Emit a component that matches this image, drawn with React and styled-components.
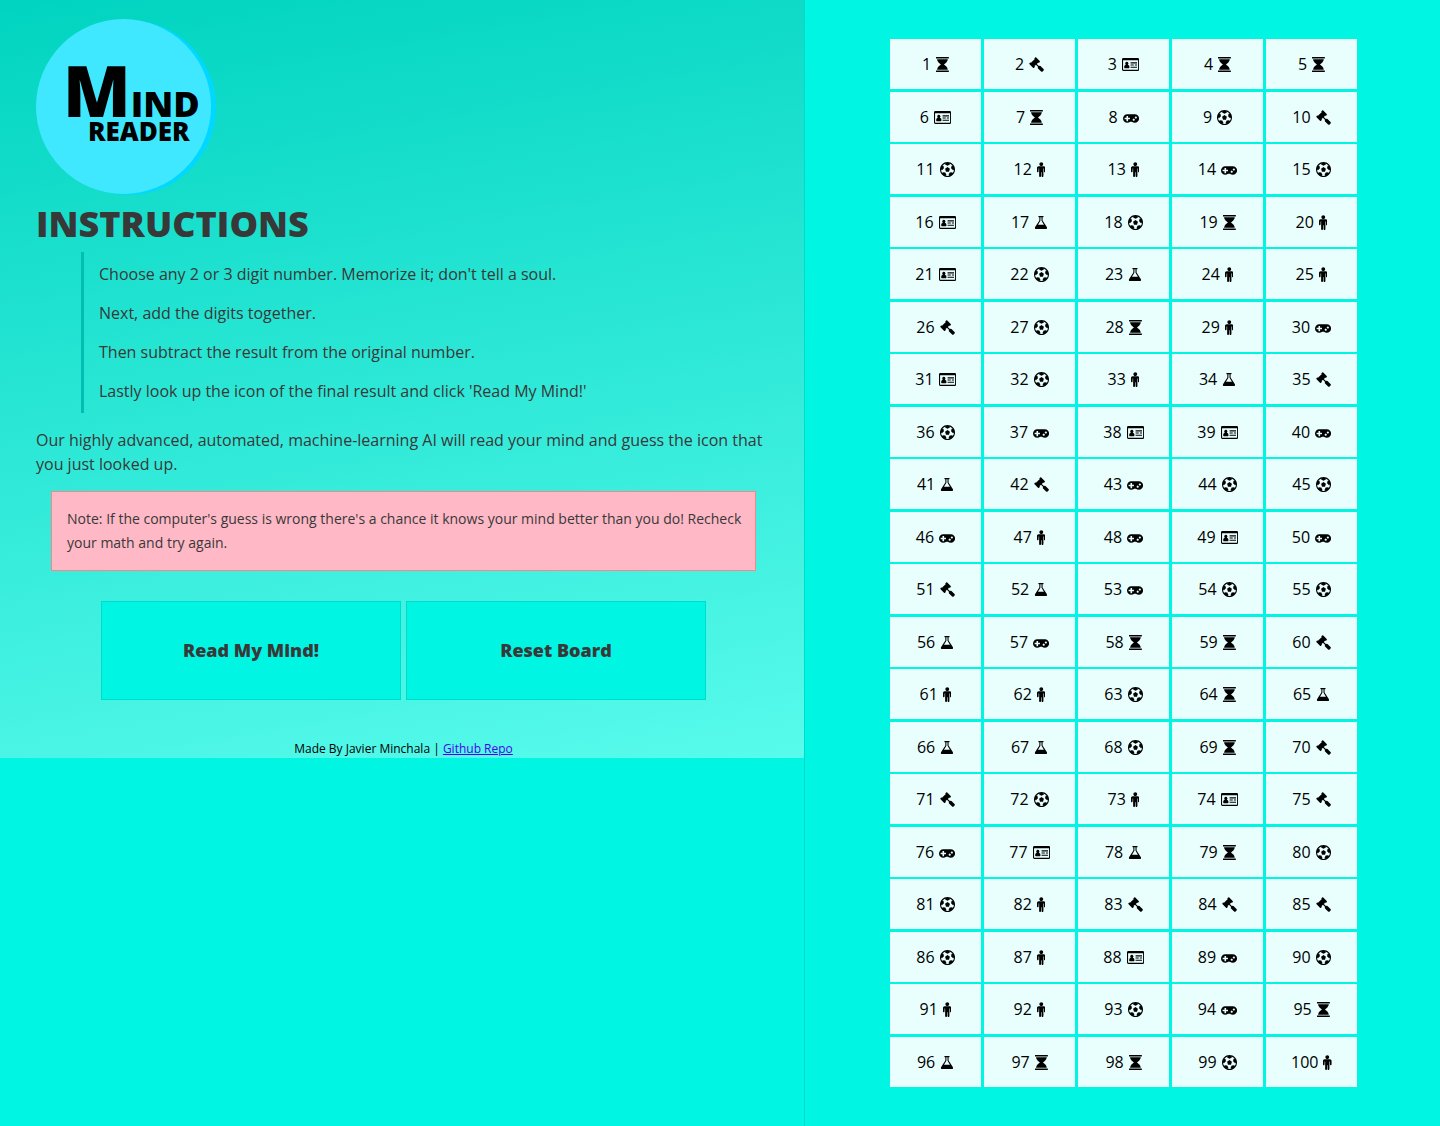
import React, { useState } from "react";
import styled, { createGlobalStyle } from "styled-components";

const GlobalStyle = createGlobalStyle`
  *, *::before, *::after { box-sizing: border-box; }
  body {
    margin: 0;
    background: #00f5e3;
    color: #000;
    font-family: "Open Sans", "Noto Sans", sans-serif;
    font-size: 16px;
    line-height: 24px;
  }
`;

const Page = styled.div`
  display: grid;
  grid-template-columns: 67fr 53fr;
  min-height: 100vh;
`;

const Intro = styled.main`
  align-self: start;
  padding: 19px 33px 0 36px;
  background: linear-gradient(170deg, #00d4c0, #58fbec);
  color: #383838;
`;

const Logo = styled.div`
  width: 175px;
  height: 175px;
  padding: 50px 0 0 27px;
  border-radius: 50%;
  background: #40e8ff;
  box-shadow: 5px 1px 0 #00d8ff;
  color: #000;
  font-weight: 800;
  white-space: nowrap;
`;

const LogoTop = styled.div`
  font-size: 36px;
  line-height: 42px;
`;

const LogoInitial = styled.span`
  font-size: 70px;
`;

const LogoBottom = styled.div`
  padding-left: 25px;
  font-size: 26px;
  line-height: 12px;
`;

const Title = styled.h1`
  margin: 5px 0 3px;
  font-size: 36px;
  font-weight: 800;
  line-height: 50px;
`;

const Steps = styled.ol`
  display: grid;
  gap: 15px;
  margin: 0 0 15px 45px;
  padding: 10px 0 10px 15px;
  border-left: 3px solid #00bfb2;
  list-style: none;
`;

const Text = styled.p`
  margin: 0;
`;

const Note = styled.aside`
  margin: 15px;
  padding: 15px 5px 15px 15px;
  border: 1px solid #fa8585;
  background: #ffb8c6;
  font-size: 14px;
`;

const Actions = styled.div`
  display: flex;
  justify-content: center;
  gap: 5px;
  margin-top: 30px;
`;

const Button = styled.button`
  width: 300px;
  padding: 36px 10px;
  border: 1px solid #00dccb;
  background: #00f5e3;
  color: #383838;
  font: 800 18px/25px "Open Sans", "Noto Sans", sans-serif;
  cursor: pointer;
`;

const Footer = styled.footer`
  margin-top: 39px;
  color: #000;
  font-size: 12px;
  line-height: 19px;
  text-align: center;

  a { color: #4b00f0; }
`;

const Board = styled.section`
  display: grid;
  padding: 39px 83px 39px 85px;
  border-left: 1px solid #00dccb;
`;

const Cells = styled.ol`
  display: grid;
  grid-template-columns: repeat(5, 1fr);
  grid-auto-rows: 50px;
  align-content: space-between;
  column-gap: 3px;
  margin: 0;
  padding: 0;
  list-style: none;
`;

const Cell = styled.li`
  display: flex;
  align-items: center;
  justify-content: center;
  gap: 5px;
  background: #e8fffd;
`;

const Glyph = styled.svg`
  height: 15px;
  margin-top: 1px;
  fill: currentColor;
`;

const ICONS = {
  h: {
    label: "hourglass",
    box: "128 0 1536 1792",
    d: "M1632 1600q14 0 23 9t9 23v128q0 14-9 23t-23 9h-1472q-14 0-23-9t-9-23v-128q0-14 9-23t23-9h1472zm-1374-64q3-55 16-107t30-95 46-87 53.5-76 64.5-69.5 66-60 70.5-55 66.5-47.5 65-43q-43-28-65-43t-66.5-47.5-70.5-55-66-60-64.5-69.5-53.5-76-46-87-30-95-16-107h1276q-3 55-16 107t-30 95-46 87-53.5 76-64.5 69.5-66 60-70.5 55-66.5 47.5-65 43q43 28 65 43t66.5 47.5 70.5 55 66 60 64.5 69.5 53.5 76 46 87 30 95 16 107h-1276zm1374-1536q14 0 23 9t9 23v128q0 14-9 23t-23 9h-1472q-14 0-23-9t-9-23v-128q0-14 9-23t23-9h1472z",
  },
  g: {
    label: "gavel",
    box: "0 0 1792 1792",
    d: "M1771 1536q0 53-37 90l-107 108q-39 37-91 37-53 0-90-37l-363-364q-38-36-38-90 0-53 43-96l-256-256-126 126q-14 14-34 14t-34-14q2 2 12.5 12t12.5 13 10 11.5 10 13.5 6 13.5 5.5 16.5 1.5 18q0 38-28 68-3 3-16.5 18t-19 20.5-18.5 16.5-22 15.5-22 9-26 4.5q-40 0-68-28l-408-408q-28-28-28-68 0-13 4.5-26t9-22 15.5-22 16.5-18.5 20.5-19 18-16.5q30-28 68-28 10 0 18 1.5t16.5 5.5 13.5 6 13.5 10 11.5 10 13 12.5 12 12.5q-14-14-14-34t14-34l348-348q14-14 34-14t34 14q-2-2-12.5-12t-12.5-13-10-11.5-10-13.5-6-13.5-5.5-16.5-1.5-18q0-38 28-68 3-3 16.5-18t19-20.5 18.5-16.5 22-15.5 22-9 26-4.5q40 0 68 28l408 408q28 28 28 68 0 13-4.5 26t-9 22-15.5 22-16.5 18.5-20.5 19-18 16.5q-30 28-68 28-10 0-18-1.5t-16.5-5.5-13.5-6-13.5-10-11.5-10-13-12.5-12-12.5q14 14 14 34t-14 34l-126 126 256 256q43-43 96-43 52 0 91 37l363 363q37 39 37 91z",
  },
  c: {
    label: "ID card",
    box: "0 0 2048 1792",
    d: "M160 128H1888Q2048 128 2048 288V1504Q2048 1664 1888 1664H160Q0 1664 0 1504V288Q0 128 160 128ZM128 384V1504Q128 1536 160 1536H1888Q1920 1536 1920 1504V384ZM576 576A192 192 0 0 1 700 914Q896 950 896 1200Q896 1344 800 1344H352Q256 1344 256 1200Q256 950 452 914A192 192 0 0 1 576 576ZM1024 640H1792V768H1024ZM1024 896H1408V1024H1024ZM1536 896H1792V1024H1536ZM1024 1152H1792V1280H1024Z",
  },
  p: {
    label: "gamepad",
    box: "0 0 1920 1792",
    d: "M832 1088v-128q0-14-9-23t-23-9h-192v-192q0-14-9-23t-23-9h-128q-14 0-23 9t-9 23v192h-192q-14 0-23 9t-9 23v128q0 14 9 23t23 9h192v192q0 14 9 23t23 9h128q14 0 23-9t9-23v-192h192q14 0 23-9t9-23zm576 64q0-53-37.5-90.5t-90.5-37.5-90.5 37.5-37.5 90.5 37.5 90.5 90.5 37.5 90.5-37.5 37.5-90.5zm256-256q0-53-37.5-90.5t-90.5-37.5-90.5 37.5-37.5 90.5 37.5 90.5 90.5 37.5 90.5-37.5 37.5-90.5zm256 128q0 212-150 362t-362 150q-192 0-338-128h-220q-146 128-338 128-212 0-362-150t-150-362 150-362 362-150h896q212 0 362 150t150 362z",
  },
  b: {
    label: "soccer ball",
    box: "0 0 1792 1792",
    d: "M609 816l287-208 287 208-109 336h-355zm287-816q182 0 348 71t286 191 191 286 71 348-71 348-191 286-286 191-348 71-348-71-286-191-191-286-71-348 71-348 191-286 286-191 348-71zm619 1350q149-203 149-454v-3l-102 89-240-224 63-323 134 12q-150-206-389-282l53 124-287 159-287-159 53-124q-239 76-389 282l135-12 62 323-240 224-102-89v3q0 251 149 454l30-132 326 40 139 298-116 69q117 39 240 39t240-39l-116-69 139-298 326-40z",
  },
  m: {
    label: "person",
    box: "0 0 1024 1792",
    d: "M1024 704v416q0 40-28 68t-68 28-68-28-28-68v-352h-64v912q0 46-33 79t-79 33-79-33-33-79v-464h-64v464q0 46-33 79t-79 33-79-33-33-79v-912h-64v352q0 40-28 68t-68 28-68-28-28-68v-416q0-80 56-136t136-56h640q80 0 136 56t56 136zM736 256q0 93-65.5 158.5t-158.5 65.5-158.5-65.5-65.5-158.5 65.5-158.5 158.5-65.5 158.5 65.5 65.5 158.5z",
  },
  f: {
    label: "flask",
    box: "64 0 1664 1792",
    d: "M1591 1448q56 89 21.5 152.5t-140.5 63.5h-1152q-106 0-140.5-63.5t21.5-152.5l503-793v-399h-64q-26 0-45-19t-19-45 19-45 45-19h512q26 0 45 19t19 45-19 45-45 19h-64v399zm-779-725l-272 429h712l-272-429-20-31v-436h-128v436z",
  },
};

const ROWS = [
  "hgchh", "chpbg", "bmmpb", "cfbhm", "cbfmm",
  "gbhmp", "cbmfg", "bpccp", "fgpbb", "pmpcp",
  "gfpbb", "fphhg", "mmbhf", "ffbhg", "gbmcg",
  "pcfhb", "bmggg", "bmcpb", "mmbph", "fhhbm",
];

function Icon({ name }) {
  const { label, box, d } = ICONS[name];
  return (
    <Glyph viewBox={box} role="img" aria-label={label}>
      <path fillRule="evenodd" d={d} />
    </Glyph>
  );
}

export default function App() {
  const [icons, setIcons] = useState(() => ROWS.join("").split(""));
  const [guess, setGuess] = useState(null);

  const reset = () => {
    setGuess(null);
    setIcons((current) => [...current].sort(() => Math.random() - 0.5));
  };

  return (
    <>
      <GlobalStyle />
      <Page>
        <Intro>
          <Logo>
            <LogoTop><LogoInitial>M</LogoInitial>IND</LogoTop>
            <LogoBottom>READER</LogoBottom>
          </Logo>
          <Title>INSTRUCTIONS</Title>
          <Steps>
            <li>Choose any 2 or 3 digit number. Memorize it; don't tell a soul.</li>
            <li>Next, add the digits together.</li>
            <li>Then subtract the result from the original number.</li>
            <li>Lastly look up the icon of the final result and click 'Read My Mind!'</li>
          </Steps>
          <Text>
            Our highly advanced, automated, machine-learning AI will read your mind
            and guess the icon that you just looked up.
          </Text>
          <Note>
            Note: If the computer's guess is wrong there's a chance it knows your mind
            better than you do! Recheck your math and try again.
          </Note>
          <Actions>
            <Button type="button" onClick={() => setGuess(icons[8])}>
              {guess ? <Icon name={guess} /> : "Read My Mind!"}
            </Button>
            <Button type="button" onClick={reset}>Reset Board</Button>
          </Actions>
          <Footer>
            Made By Javier Minchala | <a href="#repo">Github Repo</a>
          </Footer>
        </Intro>
        <Board>
          <Cells>
            {icons.map((name, index) => (
              <Cell key={index}>
                {index + 1}
                <Icon name={name} />
              </Cell>
            ))}
          </Cells>
        </Board>
      </Page>
    </>
  );
}
